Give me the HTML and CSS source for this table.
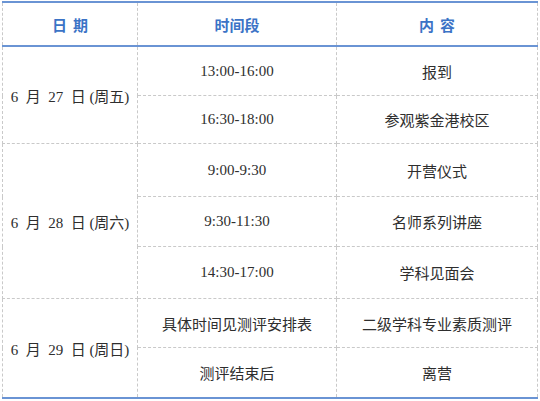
FILE: index.html
```html
<!DOCTYPE html>
<html lang="zh-CN">
<head>
<meta charset="utf-8">
<link rel="stylesheet" href="styles.css">
</head>
<body>
<table class="schedule">
  <colgroup>
    <col class="c-date">
    <col class="c-time">
    <col class="c-content">
  </colgroup>
  <thead>
    <tr class="head">
      <th><span class="spaced">日期</span></th>
      <th>时间段</th>
      <th><span class="spaced">内容</span></th>
    </tr>
  </thead>
  <tbody>
    <tr class="r1">
      <td rowspan="2" class="date">6&nbsp; 月&nbsp; 27&nbsp; 日 (周五)</td>
      <td>13:00-16:00</td>
      <td class="zh">报到</td>
    </tr>
    <tr class="r2">
      <td>16:30-18:00</td>
      <td class="zh">参观紫金港校区</td>
    </tr>
    <tr class="r3">
      <td rowspan="3" class="date">6&nbsp; 月&nbsp; 28&nbsp; 日 (周六)</td>
      <td>9:00-9:30</td>
      <td class="zh">开营仪式</td>
    </tr>
    <tr class="r4">
      <td>9:30-11:30</td>
      <td class="zh">名师系列讲座</td>
    </tr>
    <tr class="r5">
      <td>14:30-17:00</td>
      <td class="zh">学科见面会</td>
    </tr>
    <tr class="r6">
      <td rowspan="2" class="date last">6&nbsp; 月&nbsp; 29&nbsp; 日 (周日)</td>
      <td class="zh">具体时间见测评安排表</td>
      <td class="zh">二级学科专业素质测评</td>
    </tr>
    <tr class="r7">
      <td class="zh">测评结束后</td>
      <td class="zh">离营</td>
    </tr>
  </tbody>
</table>
</body>
</html>
```
FILE: styles.css
```css
html, body {
  margin: 0;
  padding: 0;
  background: #ffffff;
}

body {
  padding: 1px 3px 0 2px;
}

.schedule {
  width: 535px;
  border-collapse: collapse;
  table-layout: fixed;
  font-family: "Liberation Serif", "Noto Sans CJK SC", serif;
  font-size: 15px;
  color: #2e2e2e;
}

.c-date { width: 135px; }
.c-time { width: 199px; }
.c-content { width: 201px; }

.schedule th,
.schedule td {
  border: 1px dashed #c9c9c9;
  text-align: center;
  vertical-align: middle;
  padding: 0;
}

.schedule td.zh {
  font-family: "Noto Sans CJK SC", sans-serif;
}

.schedule th {
  font-family: "Noto Sans CJK SC", sans-serif;
  font-weight: bold;
  font-size: 15px;
  color: #3b73c6;
  border-top: 2px solid #6a94d4;
  border-bottom: 2px solid #6a94d4;
  height: 42px;
}

.spaced {
  letter-spacing: 6px;
  margin-right: -6px;
}

.schedule .r7 td,
.schedule td.last {
  border-bottom: 2px solid #6a94d4;
}

.r1 td { height: 48px; }
.r2 td { height: 47px; }
.r3 td { height: 52px; }
.r4 td { height: 49px; }
.r5 td { height: 51px; }
.r6 td { height: 48px; }
.r7 td { height: 49px; }

.date {
  white-space: nowrap;
}
```
